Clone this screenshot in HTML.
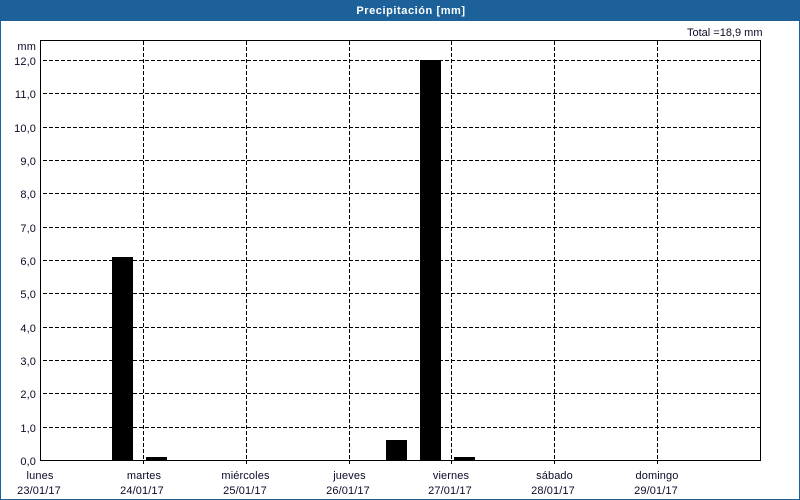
<!DOCTYPE html>
<html lang="es">
<head>
<meta charset="utf-8">
<title>Precipitación [mm]</title>
<style>
html,body{margin:0;padding:0;background:#fff;}
body{width:800px;height:500px;overflow:hidden;}
svg{display:block;}
text{font-family:"Liberation Sans",Arial,sans-serif;font-size:11px;fill:#0a0a28;letter-spacing:.12px;}
.t{font-size:11px;font-weight:bold;fill:#fff;letter-spacing:.57px;}
.y{text-anchor:end;}
.m{text-anchor:middle;}
</style>
</head>
<body>
<svg width="800" height="500" viewBox="0 0 800 500" xmlns="http://www.w3.org/2000/svg">
<rect width="800" height="500" fill="#fff"/>
<g shape-rendering="crispEdges">
<rect x="0" y="0" width="800" height="21" fill="#1c6199"/>
<rect x="0" y="0" width="1" height="500" fill="#1c6199"/>
<rect x="799" y="0" width="1" height="500" fill="#1c6199"/>
<rect x="0" y="499" width="800" height="1" fill="#1c6199"/>

<g stroke="#000" stroke-width="1" stroke-dasharray="4 2" fill="none">
<path d="M43 60.5H760M43 93.5H760M43 127.5H760M43 160.5H760M43 193.5H760M43 227.5H760M43 260.5H760M43 293.5H760M43 327.5H760M43 360.5H760M43 393.5H760M43 427.5H760"/>
<path d="M143.5 41V464M246.5 41V464M349.5 41V464M451.5 41V464M554.5 41V464M657.5 41V464"/>
</g>

<g fill="#000">
<rect x="112" y="257" width="21" height="204"/>
<rect x="146" y="457" width="21" height="4"/>
<rect x="386" y="440" width="21" height="21"/>
<rect x="420" y="60" width="21" height="401"/>
<rect x="454" y="457" width="21" height="4"/>
</g>

<rect x="40.5" y="40.5" width="720" height="420" fill="none" stroke="#000" stroke-width="1"/>
</g>

<text class="t" x="411" y="14" text-anchor="middle">Precipitación [mm]</text>
<text x="762.5" y="36" text-anchor="end" style="letter-spacing:0">Total =18,9 mm</text>

<text class="y" x="36" y="50">mm</text>
<text class="y" x="36" y="65">12,0</text>
<text class="y" x="36" y="98">11,0</text>
<text class="y" x="36" y="132">10,0</text>
<text class="y" x="36" y="165">9,0</text>
<text class="y" x="36" y="198">8,0</text>
<text class="y" x="36" y="232">7,0</text>
<text class="y" x="36" y="265">6,0</text>
<text class="y" x="36" y="298">5,0</text>
<text class="y" x="36" y="332">4,0</text>
<text class="y" x="36" y="365">3,0</text>
<text class="y" x="36" y="398">2,0</text>
<text class="y" x="36" y="432">1,0</text>
<text class="y" x="36" y="465">0,0</text>

<text class="m" x="40" y="479">lunes</text>
<text class="m" x="39" y="494">23/01/17</text>
<text class="m" x="144" y="479">martes</text>
<text class="m" x="142" y="494">24/01/17</text>
<text class="m" x="245.5" y="479">miércoles</text>
<text class="m" x="245" y="494">25/01/17</text>
<text class="m" x="349.5" y="479">jueves</text>
<text class="m" x="348" y="494">26/01/17</text>
<text class="m" x="451" y="479">viernes</text>
<text class="m" x="450" y="494">27/01/17</text>
<text class="m" x="554.5" y="479">sábado</text>
<text class="m" x="553" y="494">28/01/17</text>
<text class="m" x="657" y="479">domingo</text>
<text class="m" x="656" y="494">29/01/17</text>
</svg>
</body>
</html>
